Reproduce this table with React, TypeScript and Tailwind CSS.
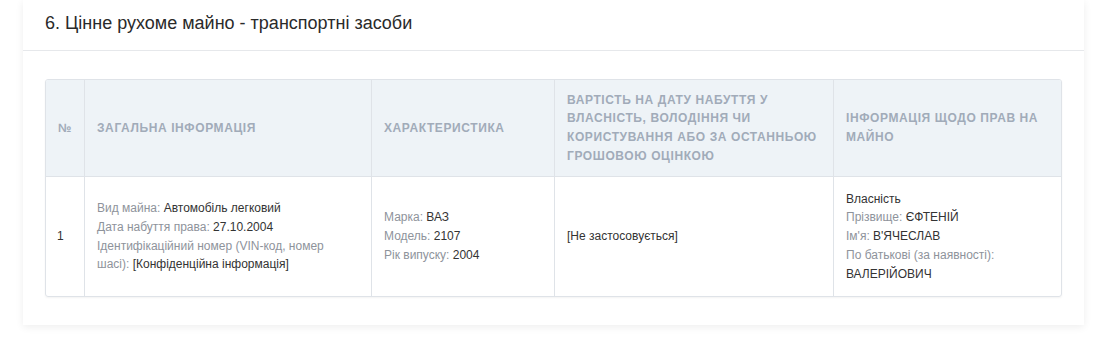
const cols = ["w-[38px]", "w-[287px]", "w-[183px]", "w-[279px]", "w-[228px]"];

const heads = [
  "№",
  "Загальна інформація",
  "Характеристика",
  "Вартість на дату набуття у власність, володіння чи користування або за останньою грошовою оцінкою",
  "Інформація щодо прав на майно",
];

function Field({ label, value }: { label: string; value: string }) {
  return (
    <div>
      <span className="text-[#8e939b]">{label}: </span>
      <span className="text-[#333]">{value}</span>
    </div>
  );
}

export default function App() {
  return (
    <div className="min-h-[348px] bg-white pl-[23px] font-['Liberation_Sans',Arial,sans-serif]">
      <div className="w-[1061px] bg-white shadow-[0_2px_8px_rgba(0,0,0,0.07)]">
        <div className="flex h-[51px] items-center border-b border-[#e6e8eb] pl-[22px] pb-[3px] text-[18px] text-[#2a2a2a]">
          6. Цінне рухоме майно - транспортні засоби
        </div>
        <div className="px-[22px] pt-[28px] pb-[28px]">
          <table className="w-[1016px] table-fixed border-separate border-spacing-0 overflow-hidden rounded-[3px] border border-[#dfe3e8] text-[12px] leading-[18.7px] shadow-[0_1px_2px_rgba(0,0,0,0.05)]">
            <colgroup>
              {cols.map((c, i) => (
                <col key={i} className={c} />
              ))}
            </colgroup>
            <thead>
              <tr className="h-[97px] bg-[#eef3f7]">
                {heads.map((h, i) => (
                  <th
                    key={i}
                    className={
                      "border-b border-[#dfe3e8] px-[12px] py-[10px] text-left align-middle font-bold uppercase tracking-[0.6px] text-[#a1abb9] " +
                      (i > 0 ? "border-l" : "")
                    }
                  >
                    {h}
                  </th>
                ))}
              </tr>
            </thead>
            <tbody>
              <tr className="h-[119px]">
                <td className="px-[11px] align-middle text-[#333]">1</td>
                <td className="border-l border-[#dfe3e8] px-[12px] align-middle">
                  <div className="max-w-[236px]">
                    <Field label="Вид майна" value="Автомобіль легковий" />
                    <Field label="Дата набуття права" value="27.10.2004" />
                    <Field label="Ідентифікаційний номер (VIN-код, номер шасі)" value="[Конфіденційна інформація]" />
                  </div>
                </td>
                <td className="border-l border-[#dfe3e8] px-[12px] align-middle">
                  <Field label="Марка" value="ВАЗ" />
                  <Field label="Модель" value="2107" />
                  <Field label="Рік випуску" value="2004" />
                </td>
                <td className="border-l border-[#dfe3e8] px-[12px] align-middle text-[#333]">[Не застосовується]</td>
                <td className="border-l border-[#dfe3e8] px-[12px] align-middle">
                  <div className="text-[#333]">Власність</div>
                  <Field label="Прізвище" value="ЄФТЕНІЙ" />
                  <Field label="Ім'я" value="В'ЯЧЕСЛАВ" />
                  <Field label="По батькові (за наявності)" value="ВАЛЕРІЙОВИЧ" />
                </td>
              </tr>
            </tbody>
          </table>
        </div>
      </div>
    </div>
  );
}
